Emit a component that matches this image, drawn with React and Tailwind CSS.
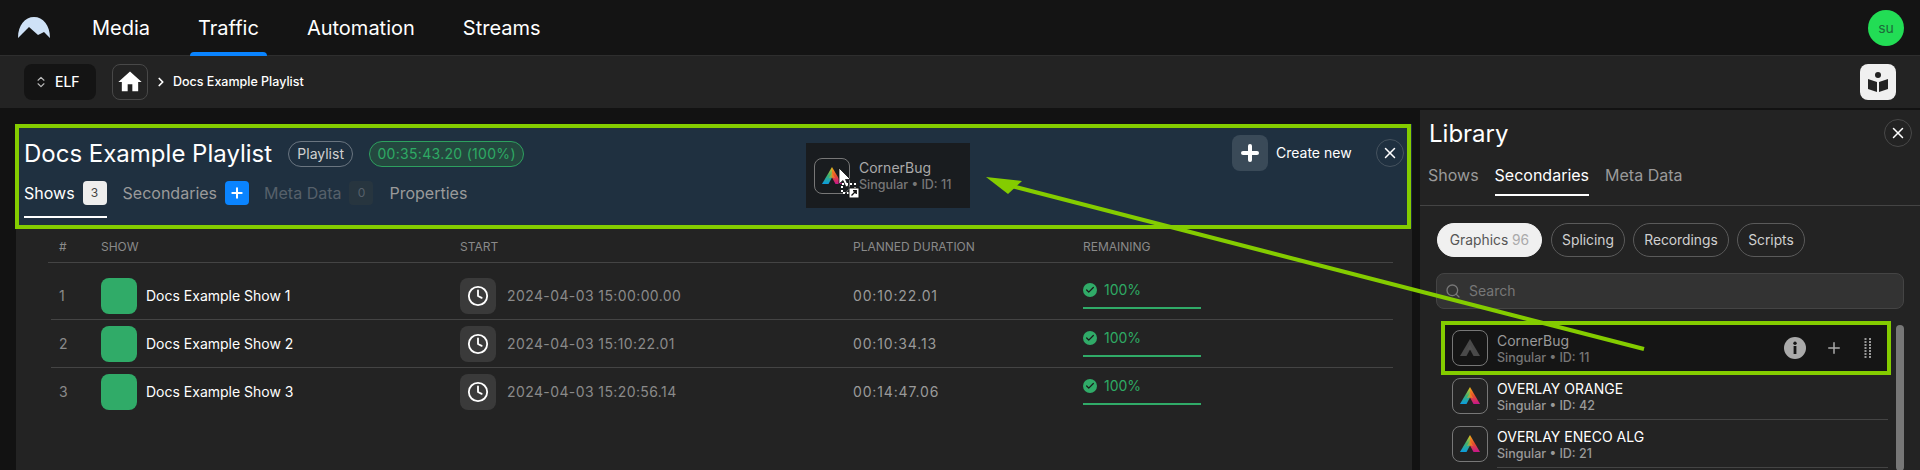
import { Check, ChevronRight, ChevronsUpDown, Clock, Plus, Search, X } from "lucide-react";

const shows = [
  { n: 1, name: "Docs Example Show 1", start: "2024-04-03 15:00:00.00", dur: "00:10:22.01" },
  { n: 2, name: "Docs Example Show 2", start: "2024-04-03 15:10:22.01", dur: "00:10:34.13" },
  { n: 3, name: "Docs Example Show 3", start: "2024-04-03 15:20:56.14", dur: "00:14:47.06" },
];

const library = [
  { name: "OVERLAY ORANGE", id: 42 },
  { name: "OVERLAY ENECO ALG", id: 21 },
];

function SingularLogo({ gray }) {
  return (
    <svg width="20" height="18" viewBox="0 0 20 18" fill="none">
      <defs>
        <linearGradient id="sgLeft" x1="0" y1="0" x2="0" y2="1">
          <stop offset="0" stopColor="#f5c518" />
          <stop offset="0.5" stopColor="#3cb371" />
          <stop offset="1" stopColor="#0a9be0" />
        </linearGradient>
        <linearGradient id="sgRight" x1="0" y1="0" x2="0" y2="1">
          <stop offset="0" stopColor="#f5b018" />
          <stop offset="0.5" stopColor="#e8502c" />
          <stop offset="1" stopColor="#c4158c" />
        </linearGradient>
      </defs>
      <path d="M10 0 V10.5 L6.5 17 H0 Z" fill={gray ? "#4a4a4a" : "url(#sgLeft)"} />
      <path d="M10 0 L20 17 H13.5 L10 10.5 Z" fill={gray ? "#4a4a4a" : "url(#sgRight)"} />
      <path d="M10 5.5 L13 11 L10 10.5 L7 11 Z" fill={gray ? "#555" : "#e8a020"} opacity="0.6" />
    </svg>
  );
}

function LogoBox({ gray }) {
  return (
    <div className="flex h-9 w-9 shrink-0 items-center justify-center rounded-lg border border-[#777]">
      <SingularLogo gray={gray} />
    </div>
  );
}

function Tab({ children, active, dim, className = "" }) {
  const color = active ? "text-white" : dim ? "text-[#56606a]" : "text-[#9a9a9a]";
  return <span className={"text-base " + color + " " + className}>{children}</span>;
}

function Chip({ children, active, className = "" }) {
  return (
    <span
      className={
        "flex h-[34px] items-center justify-center rounded-full border text-[13.8px] " +
        (active ? "border-[#f0f0f0] bg-[#f0f0f0] text-[#555] " : "border-[#5a5a5a] text-[#d0d0d0] ") +
        className
      }
    >
      {children}
    </span>
  );
}

export default function App() {
  return (
    <div className="relative h-[470px] w-[1920px] overflow-hidden bg-[#121212] font-['Inter',sans-serif] text-white">
      {/* Top nav */}
      <header className="flex h-[56px] items-center border-b border-[#2e2e2e] bg-[#141414] pl-[18px] pr-4">
        <svg width="32" height="22" viewBox="0 0 32 22">
          <path
            d="M0 21 C0 8 7 0 16 0 C25 0 32 8 32 21 L26 15 L20 18 L11 10 Z"
            fill="#cfe2f7"
          />
        </svg>
        <nav className="ml-[34px] flex h-full gap-[32px] text-xl">
          <span className="flex items-center px-2">Media</span>
          <span className="relative flex items-center px-2">
            Traffic
            <span className="absolute inset-x-0 -bottom-px h-[4px] rounded-t bg-[#0a84ff]" />
          </span>
          <span className="flex items-center px-2">Automation</span>
          <span className="flex items-center px-2">Streams</span>
        </nav>
        <div className="ml-auto flex h-9 w-9 items-center justify-center rounded-full bg-[#22dd55] text-sm text-[#1d6b3a]">
          su
        </div>
      </header>

      {/* Breadcrumb */}
      <div className="flex h-[52px] items-center bg-[#232323] px-6">
        <div className="flex h-9 w-[72px] items-center gap-[7px] rounded-lg bg-[#141414] pl-[10px] text-sm font-medium">
          <ChevronsUpDown size={14} className="text-[#bbb]" />
          ELF
        </div>
        <div className="ml-4 flex h-9 w-9 items-center justify-center rounded-lg border border-[#484848]">
          <svg width="28" height="28" viewBox="0 0 24 24" fill="white">
            <path d="M10 20v-6h4v6h5v-8h3L12 3 2 12h3v8z" />
          </svg>
        </div>
        <ChevronRight size={14} strokeWidth={3} className="ml-[6px]" />
        <span className="ml-[5px] text-[12.5px] font-medium">Docs Example Playlist</span>
        <div className="ml-auto flex h-9 w-9 items-center justify-center rounded-lg bg-[#f0f0f0]">
          <svg width="22" height="24" viewBox="0 0 22 24" fill="#232323">
            <circle cx="11" cy="5" r="3" />
            <path d="M1 9 L10 12 V22 L1 19 Z M21 9 L12 12 V22 L21 19 Z" />
          </svg>
        </div>
      </div>

      <div className="flex h-[362px] pt-[2px]">
        {/* Main */}
        <main className="ml-[16px] mt-[14px] flex w-[1396px] flex-col bg-[#232323]">
          <section className="h-[104px] bg-[#1f3040] pl-2 pr-2">
            <div className="flex h-[57px] items-center">
              <h1 className="pt-[3px] text-2xl">Docs Example Playlist</h1>
              <span className="ml-[16px] mt-[3px] flex h-[26px] w-[65px] items-center justify-center rounded-full border border-[#6a7580] text-sm text-[#d0d0d0]">
                Playlist
              </span>
              <span className="ml-4 mt-[3px] flex h-[26px] w-[155px] items-center justify-center rounded-full border border-[#2ea05f] bg-[#24483f] text-sm tracking-[0.3px] text-[#2eaa64]">
                00:35:43.20 (100%)
              </span>
              <div className="ml-auto flex items-center">
                <div className="flex h-9 w-9 items-center justify-center rounded-lg bg-[#3a4a58]">
                  <Plus size={24} strokeWidth={4} />
                </div>
                <span className="ml-2 w-[100px] text-sm">Create new</span>
                <div className="flex h-7 w-7 items-center justify-center rounded-full border border-[#45525e]">
                  <X size={18} />
                </div>
              </div>
            </div>
            <div className="flex items-center">
              <div className="relative flex items-center gap-2">
                <Tab active>Shows</Tab>
                <span className="flex h-6 w-6 items-center justify-center rounded bg-[#eeeeee] text-xs text-[#444]">3</span>
                <span className="absolute inset-x-0 top-[35px] h-[2px] bg-white" />
              </div>
              <Tab className="ml-4">Secondaries</Tab>
              <span className="ml-2 flex h-6 w-6 items-center justify-center rounded bg-[#0a84ff]">
                <Plus size={16} strokeWidth={3} />
              </span>
              <Tab dim className="ml-[15px]">Meta Data</Tab>
              <span className="ml-2 flex h-6 w-6 items-center justify-center rounded bg-[#27353f] text-xs text-[#56606a]">0</span>
              <Tab className="ml-4">Properties</Tab>
            </div>
          </section>

          {/* Table */}
          <div className="ml-[32px] mr-[19px]">
            <div className="flex h-[35px] items-center border-b border-[#444] pt-[4px] text-xs text-[#8a8a8a]">
              <span className="ml-[11px] w-[42px]">#</span>
              <span className="w-[359px]">SHOW</span>
              <span className="w-[393px]">START</span>
              <span className="w-[230px]">PLANNED DURATION</span>
              <span>REMAINING</span>
            </div>
            <div className="mt-[9px]">
              {shows.map((s) => (
                <div key={s.n} className="ml-[3px] flex h-[48px] items-center border-b border-[#444] last:border-b-0">
                  <span className="ml-[8px] w-[42px] text-sm text-[#8a8a8a]">{s.n}</span>
                  <div className="h-9 w-9 rounded-lg bg-[#30ab68]" />
                  <span className="ml-[9px] w-[314px] text-sm">{s.name}</span>
                  <div className="flex h-9 w-9 items-center justify-center rounded-lg bg-[#3a3a3a]">
                    <Clock size={22} />
                  </div>
                  <span className="ml-[11px] w-[346px] text-sm tracking-[0.4px] text-[#8a8a8a]">{s.start}</span>
                  <span className="w-[230px] text-sm tracking-[0.85px] text-[#9a9a9a]">{s.dur}</span>
                  <div className="-mt-[3px] w-[118px]">
                    <div className="flex items-center gap-[7px] pb-[7px] text-sm text-[#2eaa64]">
                      <span className="flex h-[14px] w-[14px] items-center justify-center rounded-full bg-[#30ab68]">
                        <Check size={10} strokeWidth={3} className="text-[#1a1a1a]" />
                      </span>
                      100%
                    </div>
                    <div className="h-[2px] bg-[#30ab68]" />
                  </div>
                </div>
              ))}
            </div>
          </div>
        </main>

        {/* Library */}
        <aside className="ml-2 flex w-[500px] flex-col bg-[#232323]">
          <div className="flex h-[46px] items-center pl-[9px] pr-2">
            <h2 className="pt-[2px] text-2xl">Library</h2>
            <div className="ml-auto flex h-7 w-7 items-center justify-center rounded-full border border-[#484848]">
              <X size={18} />
            </div>
          </div>
          <div className="flex h-[50px] gap-4 border-b border-[#444] pl-2 pt-[7px]">
            <Tab className="h-[33px]">Shows</Tab>
            <Tab active className="h-[33px] border-b-2 border-white">Secondaries</Tab>
            <Tab className="h-[33px]">Meta Data</Tab>
          </div>
          <div className="mt-[17px] flex gap-[8px] pl-[17px]">
            <Chip active className="mr-px w-[105px]">
              Graphics&nbsp;<span className="text-[#aaa]">96</span>
            </Chip>
            <Chip className="w-[74px]">Splicing</Chip>
            <Chip className="w-[96px]">Recordings</Chip>
            <Chip className="w-[68px]">Scripts</Chip>
          </div>
          <div className="ml-4 mr-4 mt-4 flex h-9 items-center gap-[8px] rounded-lg border border-[#444] bg-[#333] pl-2 text-sm text-[#777]">
            <Search size={16} />
            Search
          </div>
          <div className="relative ml-[21px] mr-[16px] mt-[15px] flex-1 overflow-hidden pr-[16px]">
            <div className="flex h-[48px] items-center bg-[#151515] px-[11px]">
              <LogoBox gray />
              <div className="ml-[9px] pt-[2px]">
                <div className="text-sm leading-[18px] text-[#999]">CornerBug</div>
                <div className="text-[12.5px] font-medium leading-4 text-[#777]">Singular • ID: 11</div>
              </div>
              <div className="ml-auto flex items-center">
                <svg width="22" height="22" viewBox="0 0 22 22">
                  <circle cx="11" cy="11" r="11" fill="#aaa" />
                  <rect x="9.6" y="9" width="2.8" height="8" fill="#151515" />
                  <circle cx="11" cy="6.2" r="1.7" fill="#151515" />
                </svg>
                <Plus size={18} className="ml-[19px] text-[#aaa]" />
                <svg width="8" height="20" viewBox="0 0 8 20" fill="#999" className="ml-[21px] mr-[5px]">
                  {[1, 4, 7, 10, 13, 16, 19].map((y) => (
                    <g key={y}>
                      <rect x="0.5" y={y - 1} width="2" height="2" />
                      <rect x="5" y={y - 1} width="2" height="2" />
                    </g>
                  ))}
                </svg>
              </div>
            </div>
            {library.map((l) => (
              <div key={l.id} className="flex h-[48px] items-center pl-[11px]">
                <LogoBox />
                <div className="ml-[9px] flex h-full flex-1 flex-col justify-center border-b border-[#444] pt-[2px]">
                  <div className="text-sm leading-[18px]">{l.name}</div>
                  <div className="text-[12.5px] font-medium leading-4 text-[#9a9a9a]">Singular • ID: {l.id}</div>
                </div>
              </div>
            ))}
            <div className="absolute right-0 top-[1px] h-full w-2 rounded bg-[#777]" />
          </div>
        </aside>
      </div>

      {/* Dragged item */}
      <div className="absolute left-[806px] top-[143px] flex h-[65px] w-[164px] items-center bg-[#191c1f] pl-2">
        <LogoBox />
        <div className="ml-[9px]">
          <div className="text-sm leading-[18px] text-[#aaa]">CornerBug</div>
          <div className="text-[12.5px] font-medium leading-4 text-[#777]">Singular • ID: 11</div>
        </div>
      </div>
      <svg className="absolute left-[838px] top-[168px]" width="30" height="30" viewBox="0 0 30 30">
        <path d="M1 0 V16 L5 12.5 L8 19 L10.5 18 L7.5 11.5 H12.5 Z" fill="white" stroke="#111" strokeWidth="0.8" />
        <rect x="4" y="16" width="13" height="9" fill="none" stroke="white" strokeWidth="2" strokeDasharray="2 2" />
        <rect x="11" y="20" width="10" height="10" fill="white" stroke="#111" />
        <path d="M13.5 27.5 L18 23 M15 22.8 H18.2 V26" stroke="#111" strokeWidth="1.4" fill="none" />
      </svg>

      {/* Annotation overlay */}
      <div className="pointer-events-none absolute left-[15px] top-[124px] h-[105px] w-[1396px] border-4 border-[#84cc00]" />
      <div className="pointer-events-none absolute left-[1441px] top-[321px] h-[54px] w-[450px] border-4 border-[#84cc00]" />
      <svg className="pointer-events-none absolute left-0 top-0" width="1920" height="470">
        <line x1="1644" y1="349" x2="1000" y2="183" stroke="#84cc00" strokeWidth="4" />
        <path d="M986 177 L1022 181 L1008 194 Z" fill="#84cc00" />
      </svg>
    </div>
  );
}
